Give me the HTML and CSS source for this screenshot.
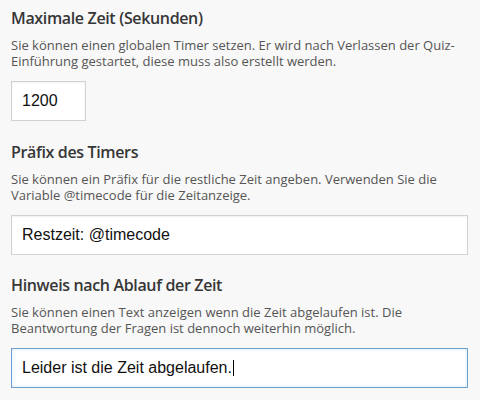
FILE: index.html
```html
<!DOCTYPE html>
<html lang="de">
<head>
<meta charset="utf-8">
<link rel="stylesheet" href="styles.css">
</head>
<body>
<div class="form">
  <section class="field">
    <h2 class="field-title">Maximale Zeit (Sekunden)</h2>
    <p class="field-help">Sie können einen globalen Timer setzen. Er wird nach Verlassen der Quiz-Einführung gestartet, diese muss also erstellt werden.</p>
    <div class="field-input field-input--short">1200</div>
  </section>
  <section class="field">
    <h2 class="field-title">Präfix des Timers</h2>
    <p class="field-help">Sie können ein Präfix für die restliche Zeit angeben. Verwenden Sie die Variable @timecode für die Zeitanzeige.</p>
    <div class="field-input">Restzeit: @timecode</div>
  </section>
  <section class="field">
    <h2 class="field-title">Hinweis nach Ablauf der Zeit</h2>
    <p class="field-help">Sie können einen Text anzeigen wenn die Zeit abgelaufen ist. Die Beantwortung der Fragen ist dennoch weiterhin möglich.</p>
    <div class="field-input field-input--focus">Leider ist die Zeit abgelaufen.<span class="caret"></span></div>
  </section>
</div>
</body>
</html>
```

FILE: styles.css
```css
html, body {
  margin: 0;
  padding: 0;
  background: #f8f8f8;
}

.form {
  display: flex;
  flex-direction: column;
  gap: 19.5px;
  padding: 7px 12px 0 11px;
}

.field {
  display: flex;
  flex-direction: column;
  align-items: flex-start;
}

.field-title {
  margin: 0;
  font-family: "Open Sans", sans-serif;
  font-weight: 600;
  font-size: 16px;
  letter-spacing: -0.35px;
  line-height: 22px;
  color: #363636;
}

.field-help {
  margin: 8px 0 12px;
  font-family: "Open Sans", sans-serif;
  font-size: 13px;
  line-height: 16px;
  color: #555;
}

.field-input {
  box-sizing: border-box;
  align-self: stretch;
  height: 40px;
  padding: 0 10px;
  background: #fff;
  border: 1px solid #d2d2d2;
  box-shadow: inset 0 1px 2px rgba(0, 0, 0, 0.06);
  font-family: "Liberation Sans", Arial, sans-serif;
  font-size: 16px;
  line-height: 38px;
  color: #111;
  white-space: nowrap;
}

.field-input--short {
  align-self: flex-start;
  width: 75px;
}

.field-input--focus {
  border-color: #6f9fd3;
  box-shadow: inset 0 0 3px rgba(102, 175, 233, 0.35);
}

.caret {
  display: inline-block;
  width: 1px;
  height: 16px;
  margin-left: 1px;
  vertical-align: -3px;
  background: #000;
}
```
